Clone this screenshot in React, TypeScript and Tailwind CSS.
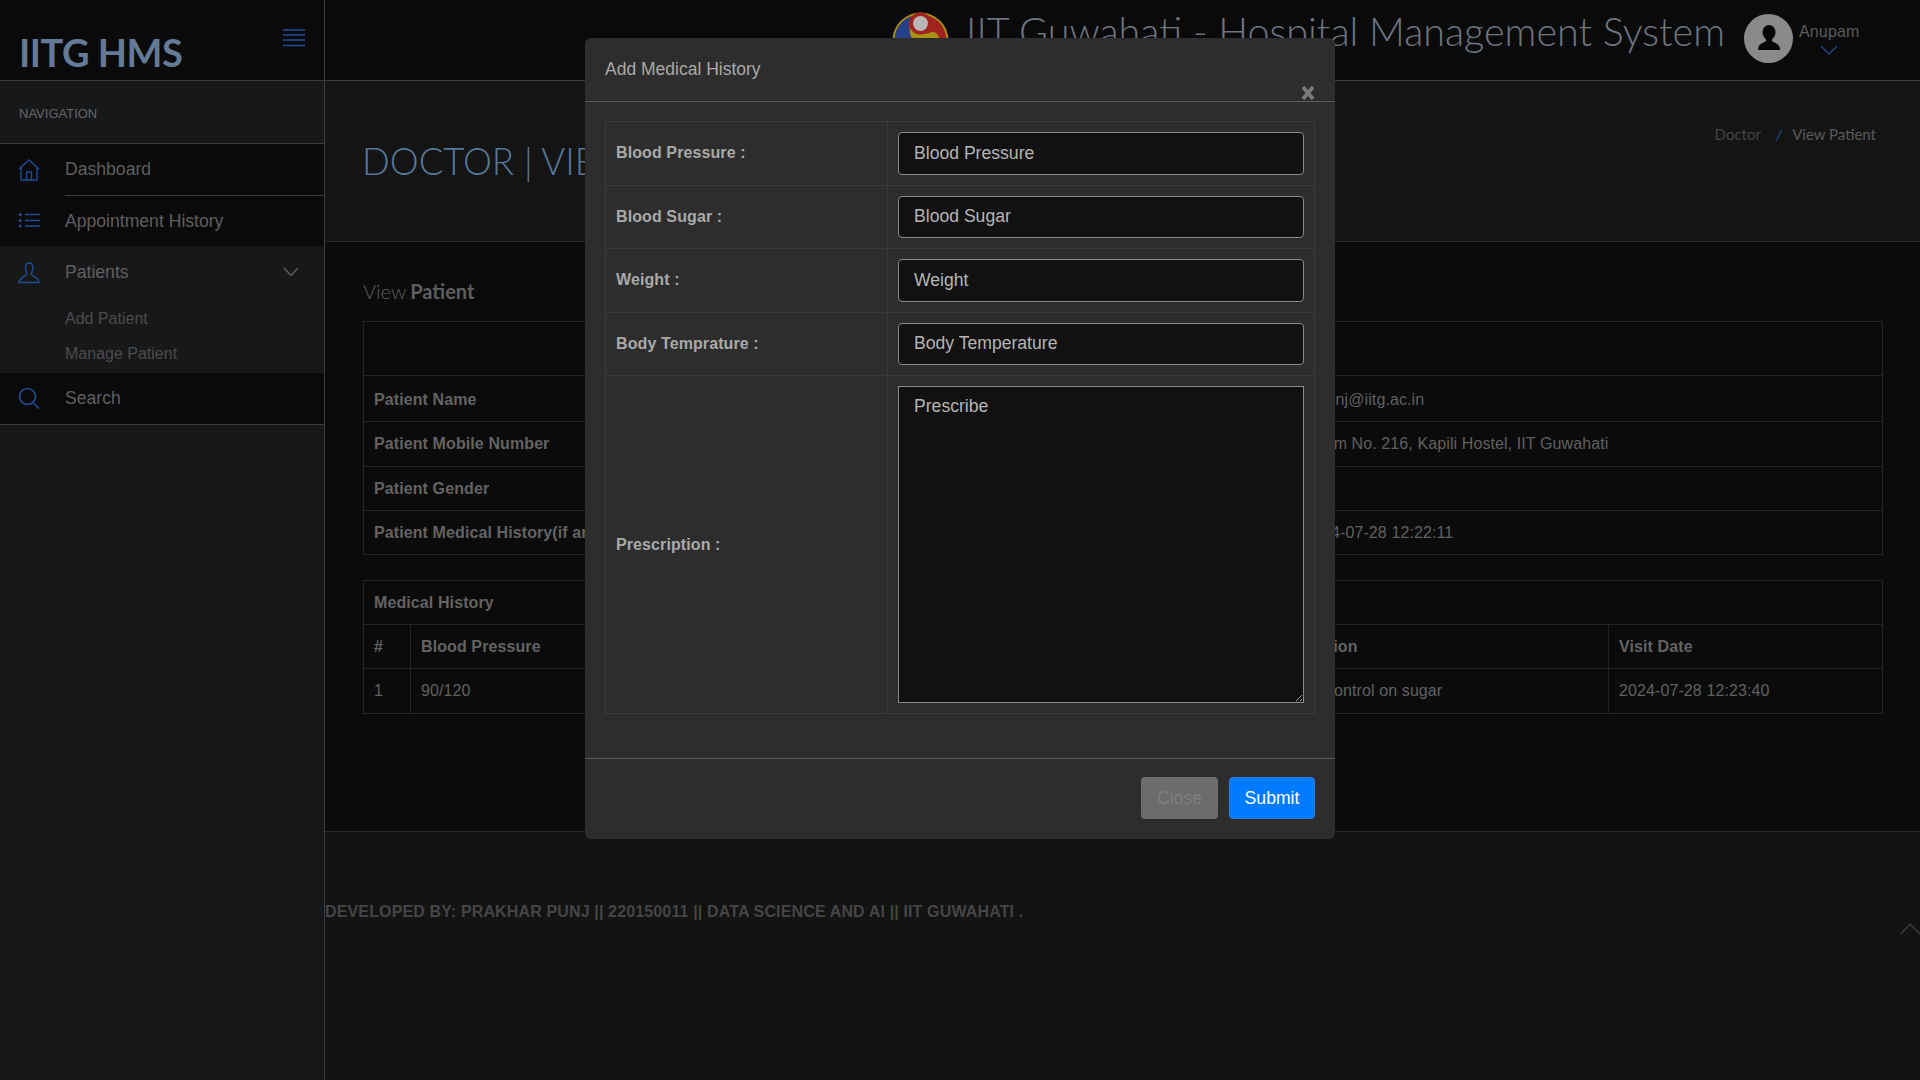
const arial = "font-['Liberation_Sans',Arial,sans-serif]";

function NavIcon({ name }: { name: string }) {
  return (
    <svg width="22" height="22" viewBox="0 0 22 22" fill="none" stroke="#1f4d94" strokeWidth="1.4">
      {name === "home" && (
        <>
          <path d="M1 10 L11 1 L21 10" />
          <path d="M3 8 V21 H19 V8" />
          <path d="M8.5 21 V13 H13.5 V21" />
        </>
      )}
      {name === "list" && (
        <>
          <circle cx="2.2" cy="4.5" r="1.6" fill="#1f4d94" stroke="none" />
          <circle cx="2.2" cy="10.5" r="1.6" fill="#1f4d94" stroke="none" />
          <circle cx="2.2" cy="16" r="1.6" fill="#1f4d94" stroke="none" />
          <path d="M7 4.5 H22 M7 10.5 H22 M7 16 H22" strokeWidth="1.6" />
        </>
      )}
      {name === "user" && (
        <path d="M7.5 6 C7.5 2.5 9 1 11 1 C13.5 1 14.8 2.5 14.8 6 C14.8 9 13.5 10.5 13.2 12 C13.2 14 20.5 15 21 20.5 H1 C1.5 15 8.8 14 8.8 12 C8.5 10.5 7.5 9 7.5 6 Z" />
      )}
      {name === "search" && (
        <>
          <circle cx="9.5" cy="9.5" r="8" strokeWidth="1.6" />
          <path d="M15 15.5 L21 21.5" strokeWidth="1.6" />
        </>
      )}
    </svg>
  );
}

function NavRow({ icon, label, divider, height }: { icon: string; label: string; divider?: boolean; height: string }) {
  return (
    <div className={`flex items-center bg-[#0a0a0b] pl-[18px] ${height}`}>
      <div className="flex w-[47px] shrink-0 items-center">
        <NavIcon name={icon} />
      </div>
      <div className={`flex h-full flex-1 items-center text-[17.6px] text-[#5f5f5f] ${divider ? "border-b border-[#3d3d3d]" : ""}`}>
        {label}
      </div>
    </div>
  );
}

function Sidebar() {
  return (
    <aside className={`flex w-[325px] shrink-0 flex-col border-r border-[#3d3d3d] bg-[#17181a] ${arial}`}>
      <div className="flex h-[81px] justify-between border-b border-[#3d3d3d] bg-[#0a0a0b] pl-[19px] pr-[19px]">
        <span className="mt-[30px] font-['Lato',sans-serif] text-[38px] leading-[44px] font-bold tracking-[-0.5px] text-[#647a96]">
          IITG HMS
        </span>
        <svg className="mt-[29px]" width="22" height="18" viewBox="0 0 22 18" stroke="#1f4d94" strokeWidth="1.3">
          <path d="M0 1 H22 M0 6 H22 M0 11 H22 M0 16.500 H22" />
        </svg>
      </div>
      <div className="flex h-[63px] items-center border-b border-[#3d3d3d] pl-[19px] pt-[3px] text-[13px] text-[#666666]">
        NAVIGATION
      </div>
      <NavRow icon="home" label="Dashboard" divider height="h-[52px]" />
      <NavRow icon="list" label="Appointment History" height="h-[50px]" />
      <div className="h-[127px] bg-[#17181a] pl-[18px]">
        <div className="flex h-[53px] items-center pr-[25px]">
          <div className="flex w-[47px] shrink-0 items-center">
            <NavIcon name="user" />
          </div>
          <span className="flex-1 text-[17.6px] text-[#5f5f5f]">Patients</span>
          <svg className="mb-[2px]" width="16" height="10" viewBox="0 0 16 10" fill="none" stroke="#5f5f5f" strokeWidth="1.3">
            <path d="M1 1 L8 8.500 L15 1" />
          </svg>
        </div>
        <div className="flex flex-col gap-[17px] pl-[47px] pt-[11px] text-[16px] leading-[18px] text-[#4c4c4c]">
          <span>Add Patient</span>
          <span>Manage Patient</span>
        </div>
      </div>
      <div className="border-b border-[#3d3d3d]">
        <NavRow icon="search" label="Search" height="h-[51px] pb-[1px]" />
      </div>
    </aside>
  );
}

function Logo() {
  return (
    <svg width="57" height="57" viewBox="0 0 57 57" className="mr-[17px]">
      <defs>
        <clipPath id="logo-clip">
          <circle cx="28.500" cy="28.500" r="26" />
        </clipPath>
      </defs>
      <circle cx="28.500" cy="28.500" r="28" fill="#a98f12" />
      <g clipPath="url(#logo-clip)">
        <rect width="57" height="57" fill="#a02320" />
        <path d="M19 6 C14 12 18 20 22 26 L22 57 L0 57 L0 0 L19 0 Z" fill="#26408a" />
        <path d="M17 8 C16 18 22 22 30 22 C36 22 38 20 41 20 C44 20 46 22 47 26 L47 50 L20 50 C24 40 22 30 18 22 Z" fill="#a98f12" />
      </g>
      <circle cx="28.500" cy="11.500" r="11" fill="#a02320" />
      <circle cx="28.500" cy="11.500" r="7.500" fill="#b8b8b8" />
    </svg>
  );
}

function Header() {
  return (
    <header className="flex h-[81px] items-start border-b border-[#3d3d3d] bg-[#0a0a0b]">
      <div className="flex flex-1 justify-end pt-[12px]">
        <Logo />
        <span className="font-['Lato',sans-serif] text-[39.5px] leading-[38px] font-light text-[#6d7681]">
          IIT Guwahati - Hospital Management System
        </span>
      </div>
      <div className={`flex w-[195px] shrink-0 pl-[19px] pt-[14px] ${arial}`}>
        <div className="flex h-[49px] w-[49px] items-end justify-center overflow-hidden rounded-full bg-[#8a8a8a]">
          <svg width="22" height="25" viewBox="0 0 22 25" className="mb-[13px]" fill="#050505">
            <ellipse cx="11" cy="7.500" rx="6.500" ry="7.500" />
            <path d="M8 13 H14 V16 C16 18 22 18 22 25 H0 C0 18 6 18 8 16 Z" />
          </svg>
        </div>
        <div className="ml-[6px] flex flex-col items-center pt-[8px]">
          <span className="text-[16px] leading-[20px] tracking-[0.15px] text-[#5a5a5a]">Anupam</span>
          <svg className="mt-[3px]" width="18" height="10" viewBox="0 0 18 10" fill="none" stroke="#1f4d94" strokeWidth="1.2">
            <path d="M1 1 L9 9 L17 1" />
          </svg>
        </div>
      </div>
    </header>
  );
}

const cell = "border border-[#242424] px-[10px] align-middle";

function PatientTable() {
  const rows = [
    ["Patient Name", "Prakhar Punj", "Patient Email", "p.punj@iitg.ac.in"],
    ["Patient Mobile Number", "9876543210", "Patient Address", "Room No. 216, Kapili Hostel, IIT Guwahati"],
    ["Patient Gender", "Male", "Patient Age", "20"],
    ["Patient Medical History(if any)", "None", "Patient Reg Date", "2024-07-28 12:22:11"],
  ];
  return (
    <table className={`w-[1520px] table-fixed border-collapse text-[16px] tracking-[0.1px] text-[#606060] ${arial}`}>
      <colgroup>
        <col className="w-[300px]" />
        <col className="w-[330px]" />
        <col className="w-[300px]" />
        <col />
      </colgroup>
      <tbody>
        <tr className="h-[54px]">
          <td colSpan={4} className={cell}></td>
        </tr>
        {rows.map((r, i) => (
          <tr key={r[0]} className={i === 0 ? "h-[46px]" : i === 1 ? "h-[45px]" : "h-[44px]"}>
            <th className={`${cell} text-left font-bold text-[#636363] whitespace-nowrap overflow-hidden ${i === 0 ? "pt-[2px]" : ""}`}>{r[0]}</th>
            <td className={`${cell} ${i === 0 ? "pt-[2px]" : ""}`}>{r[1]}</td>
            <th className={`${cell} text-left font-bold text-[#636363] ${i === 0 ? "pt-[2px]" : ""}`}>{r[2]}</th>
            <td className={`${cell} whitespace-nowrap ${i === 0 ? "pt-[2px]" : ""}`}>{r[3]}</td>
          </tr>
        ))}
      </tbody>
    </table>
  );
}

function HistoryTable() {
  const heads = ["#", "Blood Pressure", "Weight", "Blood Sugar", "Body Temprature", "Prescription", "Visit Date"];
  const vals = ["1", "90/120", "72", "110", "98", "Manage control on sugar", "2024-07-28 12:23:40"];
  return (
    <table className={`mt-[25px] w-[1520px] table-fixed border-collapse text-[16px] tracking-[0.1px] text-[#606060] ${arial}`}>
      <colgroup>
        <col className="w-[47px]" />
        <col className="w-[250px]" />
        <col className="w-[200px]" />
        <col className="w-[200px]" />
        <col className="w-[192px]" />
        <col className="w-[356px]" />
        <col />
      </colgroup>
      <tbody>
        <tr className="h-[44px]">
          <th colSpan={7} className={`${cell} text-left font-bold text-[#636363]`}>
            Medical History
          </th>
        </tr>
        <tr className="h-[44px]">
          {heads.map((h) => (
            <th key={h} className={`${cell} text-left font-bold text-[#636363]`}>
              {h}
            </th>
          ))}
        </tr>
        <tr className="h-[45px]">
          {vals.map((v) => (
            <td key={v} className={cell}>
              {v}
            </td>
          ))}
        </tr>
      </tbody>
    </table>
  );
}

function Main() {
  return (
    <main className="flex min-w-0 flex-1 flex-col">
      <Header />
      <div className="flex h-[161px] justify-between border-b border-[#2a2a2a] bg-[#141414] pl-[37px] pr-[44px]">
        <h1 className="mt-[55px] font-['Lato',sans-serif] text-[36.5px] leading-[50px] font-light text-[#55789a]">
          DOCTOR | VIEW PATIENT
        </h1>
        <div className="mt-[43px] flex h-[20px] font-['Lato',sans-serif] text-[15px] leading-[20px]">
          <span className="text-[#454545]">Doctor</span>
          <span className="ml-[15px] mr-[10px] text-[#1f4d94] italic">/</span>
          <span className="text-[#5a5a5a]">View Patient</span>
        </div>
      </div>
      <div className="h-[590px] border-b border-[#2a2a2a] bg-[#0b0b0b] pl-[38px]">
        <h2 className="mt-[35px] mb-[16px] flex h-[28px] gap-[4px] font-['Lato',sans-serif] text-[20px] leading-[28px] text-[#5f5f5f]">
          <span className="font-light">View</span>
          <span className="font-bold">Patient</span>
        </h2>
        <PatientTable />
        <HistoryTable />
      </div>
      <footer className={`relative flex-1 bg-[#131313] pt-[71px] text-[16px] leading-[18px] font-bold tracking-[0.14px] text-[#454545] ${arial}`}>
        DEVELOPED BY: PRAKHAR PUNJ || 220150011 || DATA SCIENCE AND AI || IIT GUWAHATI .
        <svg className="absolute right-0 top-[91px]" width="20" height="12" viewBox="0 0 20 12" fill="none" stroke="#3f4650" strokeWidth="1.2">
          <path d="M1 11 L10 1 L20 11" />
        </svg>
      </footer>
    </main>
  );
}

function FormRow({ label, placeholder }: { label: string; placeholder: string }) {
  return (
    <div className="flex h-[63.500px] border-b border-[#3a3a3a]">
      <div className="flex w-[282px] shrink-0 items-center border-r border-[#3a3a3a] pl-[10px] text-[16px] font-bold tracking-[0.1px] text-[#a9a9a9]">
        {label}
      </div>
      <div className="flex flex-1 items-center px-[10px]">
        <input
          readOnly
          placeholder={placeholder}
          className="h-[42.500px] w-full rounded-[4px] border border-[#8a8a8a] bg-[#111111] px-[15px] text-[17.6px] text-[#b5b5b5] placeholder:text-[#b5b5b5] outline-none"
        />
      </div>
    </div>
  );
}

function Modal() {
  return (
    <div className={`absolute left-[585px] top-[38px] flex h-[801px] w-[750px] flex-col rounded-[6px] bg-[#2d2d2d] ${arial}`}>
      <div className="relative flex h-[64px] shrink-0 items-center border-b border-[#5a5a5a] pl-[20px] pb-[1px] text-[17.500px] text-[#a9a9a9]">
        Add Medical History
        <svg className="absolute right-[20px] top-[48px]" width="14" height="14" viewBox="0 0 14 14" stroke="#7a7a7a" strokeWidth="3.800">
          <path d="M2 1 L12 13 M12 1 L2 13" />
        </svg>
      </div>
      <div className="flex-1 px-[20px] pt-[19px]">
        <div className="border-x border-t border-[#3a3a3a]">
          <FormRow label="Blood Pressure :" placeholder="Blood Pressure" />
          <FormRow label="Blood Sugar :" placeholder="Blood Sugar" />
          <FormRow label="Weight :" placeholder="Weight" />
          <FormRow label="Body Temprature :" placeholder="Body Temperature" />
          <div className="flex h-[338px] border-b border-[#3a3a3a]">
            <div className="flex w-[282px] shrink-0 items-center border-r border-[#3a3a3a] pl-[10px] text-[16px] font-bold tracking-[0.1px] text-[#a9a9a9]">
              Prescription :
            </div>
            <div className="flex flex-1 items-center px-[10px]">
              <textarea
                readOnly
                placeholder="Prescribe"
                className="h-[317px] w-full border border-[#8a8a8a] bg-[#111111] px-[15px] py-[6px] text-[17.6px] text-[#b5b5b5] placeholder:text-[#b5b5b5] outline-none"
              />
            </div>
          </div>
        </div>
      </div>
      <div className="flex h-[81px] shrink-0 items-start justify-end gap-[11px] border-t border-[#5a5a5a] pr-[20px] pt-[18px] text-[17.6px]">
        <button className="h-[42px] w-[77px] rounded-[4px] bg-[#6c6c6c] text-[#7e7e7e]">Close</button>
        <button className="h-[42px] w-[86px] rounded-[4px] border border-[#2b7fe0] bg-[#007bff] text-white">Submit</button>
      </div>
    </div>
  );
}

export default function App() {
  return (
    <div className="relative flex h-[1080px] w-[1920px] overflow-hidden bg-[#131313]">
      <Sidebar />
      <Main />
      <Modal />
    </div>
  );
}
